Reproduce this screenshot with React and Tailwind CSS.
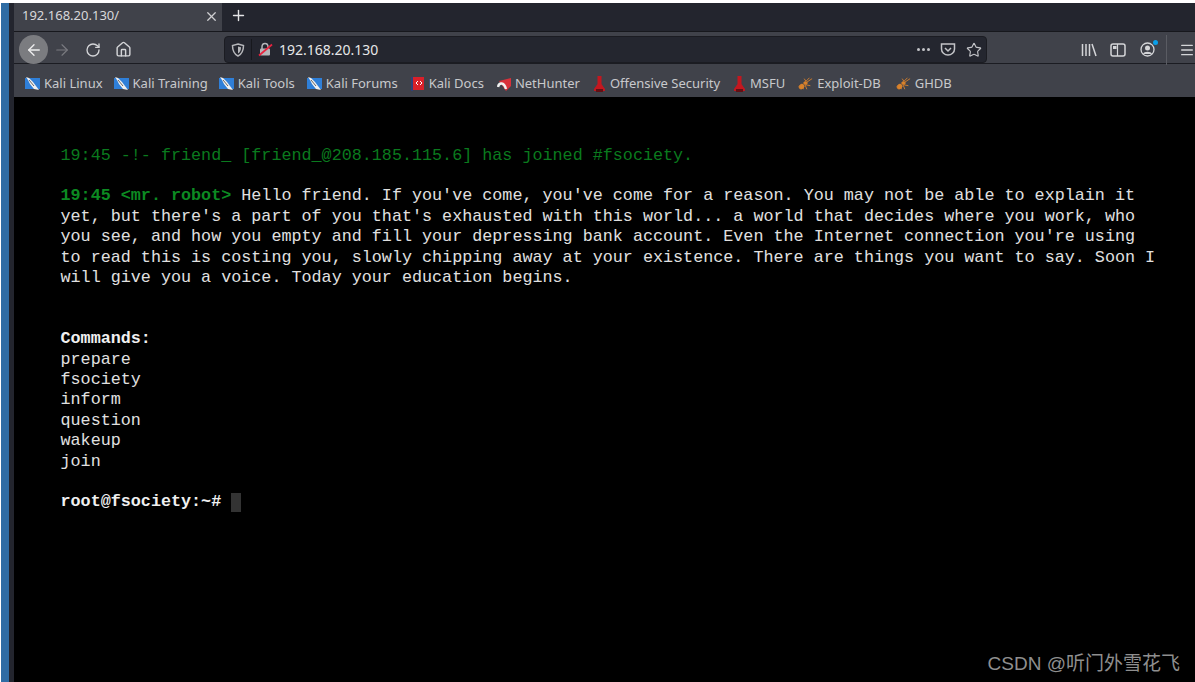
import React from "react";
import { ArrowLeft, ArrowRight, RotateCw, Home, X, Plus, Star, Menu } from "lucide-react";

const sans = { fontFamily: '"Noto Sans", sans-serif' };

const KaliIcon = () => (
  <svg width="15" height="15" viewBox="0 0 15 15" className="shrink-0">
    <rect x="0" y="2" width="15" height="11" fill="#2f7fd8" />
    <path d="M1 1 L4 2 L8 6 L14 14 L9 13 L5 8 L3 4 Z" fill="#f0f0f0" />
    <path d="M4 4 L9 10" stroke="#666" strokeWidth="1" />
  </svg>
);

const DocsIcon = () => (
  <svg width="14" height="16" viewBox="0 0 14 16" className="shrink-0">
    <rect x="0" y="1" width="2" height="14" fill="#30407a" />
    <rect x="2" y="1" width="11" height="13" fill="#d9202a" />
    <path d="M5 7 L7 5 M5 7 L7 9 M11 7 L9 5 M11 7 L9 9" stroke="#fff" strokeWidth="1" />
  </svg>
);

const HunterIcon = () => (
  <svg width="14" height="14" viewBox="0 0 14 14" className="shrink-0">
    <path d="M2 4 L14 1 L14 9 L9 14 Z" fill="#d9303a" />
    <path d="M1 10 C2 5 7 5 9 12" stroke="#f0f0f0" strokeWidth="2.4" fill="none" />
  </svg>
);

const OffsecIcon = () => (
  <svg width="13" height="16" viewBox="0 0 13 16" className="shrink-0">
    <path d="M4.5 0 H8.5 L8.5 8 L12 13 L12 15 H1 L1 13 L4.5 8 Z" fill="#c3171f" />
    <rect x="3" y="13" width="7" height="3" fill="#611015" />
  </svg>
);

const AntIcon = () => (
  <svg width="15" height="15" viewBox="0 0 17 15" className="shrink-0" fill="none" stroke="#d9822b" strokeWidth="1">
    <ellipse cx="4" cy="11" rx="3" ry="2.4" fill="#d9822b" transform="rotate(-40 4 11)" />
    <ellipse cx="8.5" cy="7" rx="2" ry="1.6" fill="#d9822b" />
    <path d="M10 6 L16 2 M9 5 L13 1 M9 9 L14 10 M8 9 L10 14 M6 9 L6 14 M9 5 L7 2" />
  </svg>
);

const bookmarks = [
  { label: "Kali Linux", icon: <KaliIcon />, extra: "" },
  { label: "Kali Training", icon: <KaliIcon />, extra: "" },
  { label: "Kali Tools", icon: <KaliIcon />, extra: "" },
  { label: "Kali Forums", icon: <KaliIcon />, extra: "ml-[1px]" },
  { label: "Kali Docs", icon: <DocsIcon />, extra: "ml-[2px]" },
  { label: "NetHunter", icon: <HunterIcon />, extra: "ml-[2px]" },
  { label: "Offensive Security", icon: <OffsecIcon />, extra: "ml-[2px]" },
  { label: "MSFU", icon: <OffsecIcon />, extra: "ml-[2px]" },
  { label: "Exploit-DB", icon: <AntIcon />, extra: "ml-[2px]" },
  { label: "GHDB", icon: <AntIcon />, extra: "ml-[4px]" },
];

const commands = ["prepare", "fsociety", "inform", "question", "wakeup", "join"];

const TabBar = () => (
  <div className="flex h-[28px] items-stretch bg-[#23252e]">
    <div className="flex w-[208px] items-center justify-between bg-[#40424a] pb-[2px] pl-2 pr-[2px] text-[13px] text-[#d8d8da]">
      <span>192.168.20.130/</span>
      <X size={15} strokeWidth={2} className="mr-[1px] text-[#cfcfd2]" />
    </div>
    <div className="ml-[8px] flex items-center pb-[3px]">
      <Plus size={17} strokeWidth={2} className="text-[#e4e4e6]" />
    </div>
  </div>
);

const UrlBar = () => (
  <div className="flex h-[27px] w-[763px] items-center rounded-[4px] border border-[#1b1c22] bg-[#24262f] pl-[6px] pr-[4px]">
    <svg width="14" height="14" viewBox="0 0 14 14" className="shrink-0">
      <path d="M7 1 L12.5 2.5 C12.5 8 11 11 7 13 C3 11 1.5 8 1.5 2.5 Z" fill="none" stroke="#b5b6ba" strokeWidth="1.5" />
      <path d="M7 3.5 L10 4.2 C10 7.5 9 9 7 10.5 Z" fill="#b5b6ba" />
    </svg>
    <div className="ml-[6px] h-[21px] w-px bg-[#17181d]" />
    <svg width="15" height="15" viewBox="0 0 15 15" className="ml-[6px] shrink-0">
      <path d="M4 7 V5 C4 2.6 5.4 1.5 7 1.5 C8.6 1.5 10 2.6 10 5 V7" fill="none" stroke="#b5b6ba" strokeWidth="1.5" />
      <rect x="2" y="6.5" width="10" height="7" rx="1" fill="#b5b6ba" />
      <path d="M1 13.5 L14 2.5" stroke="#e8233f" strokeWidth="1.7" />
    </svg>
    <span className="ml-[6px] text-[14px] text-[#e6e6e8]">192.168.20.130</span>
    <div className="ml-auto flex items-center">
      <div className="flex gap-[2px]">
        <span className="h-[3px] w-[3px] rounded-full bg-[#c3c4c8]" />
        <span className="h-[3px] w-[3px] rounded-full bg-[#c3c4c8]" />
        <span className="h-[3px] w-[3px] rounded-full bg-[#c3c4c8]" />
      </div>
      <svg width="16" height="15" viewBox="0 0 16 15" className="ml-[10px]">
        <path d="M1.5 2 H14.5 V7 C14.5 10.5 11.5 13 8 13 C4.5 13 1.5 10.5 1.5 7 Z" fill="none" stroke="#c3c4c8" strokeWidth="1.5" />
        <path d="M5 6 L8 9 L11 6" fill="none" stroke="#c3c4c8" strokeWidth="1.5" />
      </svg>
      <Star size={16} strokeWidth={1.7} className="ml-[10px] text-[#c3c4c8]" />
    </div>
  </div>
);

const NavBar = () => (
  <div className="flex h-[32px] items-center border-t border-[#17181d] bg-[#40424a] pl-[5px] pt-[4px] text-[#d4d5d8]">
    <div className="flex h-[29px] w-[29px] shrink-0 items-center justify-center rounded-full bg-[#7b7c80]">
      <ArrowLeft size={18} strokeWidth={1.8} className="text-[#eeeeee]" />
    </div>
    <ArrowRight size={18} strokeWidth={1.5} className="ml-[5px] shrink-0 text-[#7a7b80]" />
    <RotateCw size={16} strokeWidth={2} className="ml-[14px] shrink-0" />
    <Home size={17} strokeWidth={2} className="ml-[14px] shrink-0" />
    <div className="ml-[92px]">
      <UrlBar />
    </div>
    <svg width="16" height="14" viewBox="0 0 16 14" className="ml-[94px] shrink-0">
      <path d="M1.5 1 V13 M5 1 V13 M8.5 1 V13 M11 1 L15 13" stroke="#d4d5d8" strokeWidth="1.5" fill="none" />
    </svg>
    <svg width="16" height="14" viewBox="0 0 16 14" className="ml-[13px] shrink-0">
      <rect x="1" y="1" width="14" height="12" rx="2" fill="none" stroke="#d4d5d8" strokeWidth="1.5" />
      <rect x="3" y="3" width="3.5" height="3" fill="#d4d5d8" />
      <path d="M7.5 1 V13" stroke="#d4d5d8" strokeWidth="1.2" />
    </svg>
    <div className="relative ml-[14px] shrink-0">
      <svg width="15" height="15" viewBox="0 0 15 15" className="block">
        <circle cx="7.5" cy="7.5" r="6.5" fill="none" stroke="#d4d5d8" strokeWidth="1.3" />
        <circle cx="7.5" cy="6" r="2.5" fill="#d4d5d8" />
        <path d="M3 12 C4 9 11 9 12 12" fill="#d4d5d8" />
      </svg>
      <span className="absolute -right-[3px] -top-[2px] h-[5px] w-[5px] rounded-full bg-[#0a9fe8]" />
    </div>
    <div className="ml-[11px] h-[30px] w-px shrink-0 bg-[#5a5c63]" />
    <Menu size={16} strokeWidth={2} className="ml-[12px] shrink-0" />
  </div>
);

const BookmarkBar = () => (
  <div className="flex h-[34px] items-center gap-[11px] border-t border-[#1b1c22] bg-[#40424a] pl-[11px] pt-[6px] text-[13px] text-[#c8c9cc]">
    {bookmarks.map((b) => (
      <div key={b.label} className={`flex items-center gap-[4px] whitespace-nowrap ${b.extra}`}>
        {b.icon}
        <span>{b.label}</span>
      </div>
    ))}
  </div>
);

const Terminal = () => (
  <div
    className="h-[585px] bg-black pl-[46.5px] pt-[48.5px] text-[16.74px] leading-[20.4px] text-[#e0e0e0]"
    style={{ fontFamily: '"Liberation Mono", monospace' }}
  >
    <div className="w-[1098px]">
      <p className="text-[#0a7a1e]">19:45 -!- friend_ [friend_@208.185.115.6] has joined #fsociety.</p>
      <p className="mt-[20.4px]">
        <span className="font-bold text-[#0c8a22]">19:45 &lt;mr. robot&gt;</span> Hello friend. If you've come, you've
        come for a reason. You may not be able to explain it yet, but there's a part of you that's exhausted with this
        world... a world that decides where you work, who you see, and how you empty and fill your depressing bank
        account. Even the Internet connection you're using to read this is costing you, slowly chipping away at your
        existence. There are things you want to say. Soon I will give you a voice. Today your education begins.
      </p>
      <p className="mt-[40.8px] font-bold text-[#f0f0f0]">Commands:</p>
      {commands.map((c) => (
        <p key={c}>{c}</p>
      ))}
      <div className="mt-[20.4px] flex items-center font-bold text-[#f0f0f0]">
        <span>root@fsociety:~#</span>
        <span className="ml-[10px] h-[19px] w-[10px] bg-[#333333]" />
      </div>
    </div>
  </div>
);

export default function App() {
  return (
    <div className="relative h-[682px] w-[1195px] overflow-hidden bg-white pt-[3px]" style={sans}>
      <div className="flex h-[679px]">
        <div className="ml-[1px] w-[8px] shrink-0 bg-[#2e6ca4]" />
        <div className="w-[5px] shrink-0 bg-[#23252e]" />
        <div className="min-w-0 flex-1">
          <TabBar />
          <NavBar />
          <BookmarkBar />
          <Terminal />
        </div>
      </div>
      <div
        className="absolute bottom-[6px] right-[15px] whitespace-nowrap text-[19px] leading-[24px] text-[#8f8f8f]"
        style={{ fontFamily: '"Liberation Sans", "Noto Sans CJK SC", sans-serif' }}
      >
        CSDN @听门外雪花飞
      </div>
    </div>
  );
}
